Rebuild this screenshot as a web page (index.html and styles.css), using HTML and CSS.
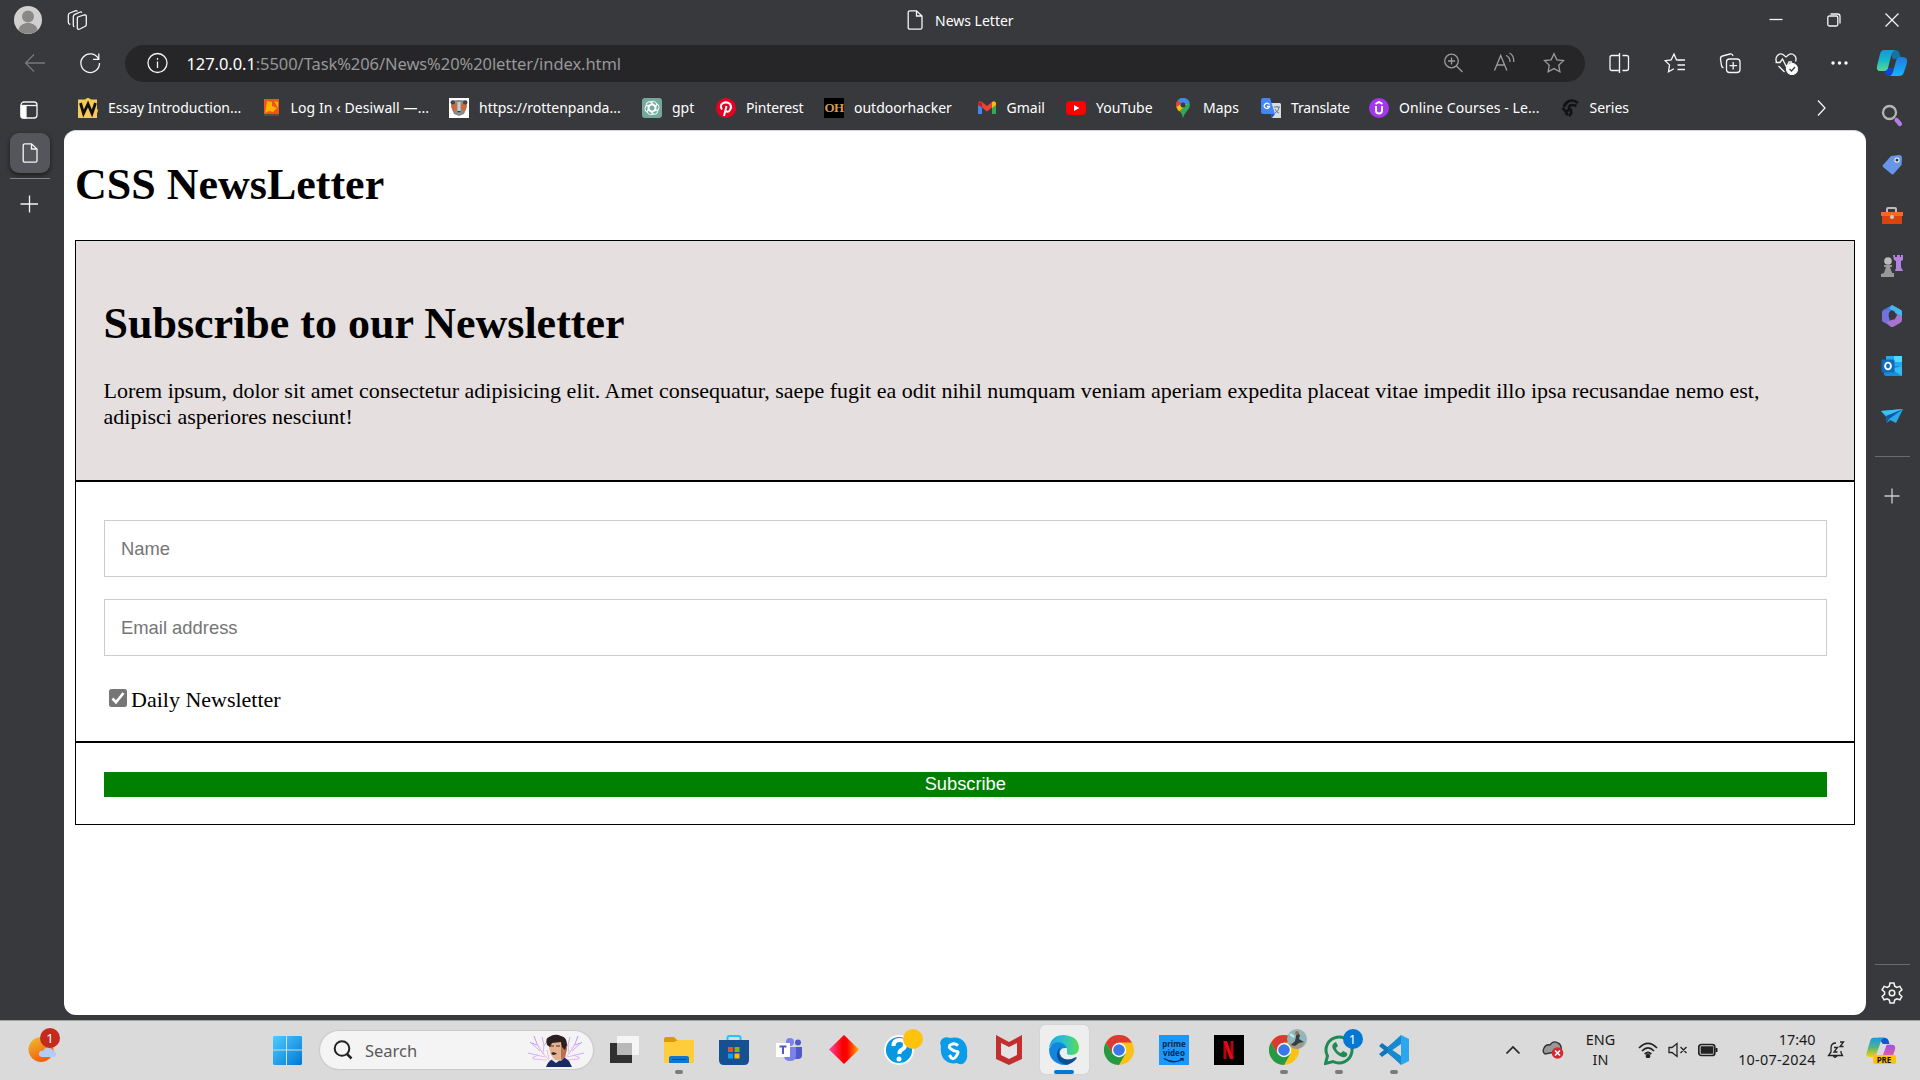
FILE: index.html
```
<!DOCTYPE html>
<html lang="en">
<head>
<meta charset="utf-8">
<title>News Letter</title>
<link rel="stylesheet" href="styles.css">
</head>
<body>
<div class="browser">
  <header class="titlebar">
    <svg class="avatar" width="28" height="28" viewBox="0 0 28 28"><circle cx="14" cy="14" r="14" fill="#d2d0ce"/><circle cx="14" cy="10.5" r="6" fill="#8a8886"/><path d="M4.500 24c1-5 5-7 9.500-7s8.500 2 9.500 7a14 14 0 0 1-19 0z" fill="#8a8886"/></svg>
    <svg class="workspaces line" width="24" height="24" viewBox="0 0 24 24"><path d="M12.500 8.500l6.500-2q2-.5 2 1.500v8q0 1.500-1.500 2l-5 2.500q-2.500 1-2.500-1.500v-8q0-2 .5-2.500zM9 18.500q-1-.5-1-2V8q0-1.500 1.500-2.200L15 3.500q1-.4 1.500.8M5 16q-2-.5-2-2.500V7q0-2 1.500-2.500L10 2.300q1.500-.5 2 .8" transform="translate(.3 .5)"/></svg>
    <div class="window-title">
      <svg class="line" width="16" height="20" viewBox="0 0 16 20"><path d="M3 .8h6.500L15 6v11.500q0 1.700-1.700 1.700H3q-1.800 0-1.800-1.700v-15Q1.200.8 3 .8zM9.500 1v5h5.500"/></svg>
      <span class="t-title">News Letter</span>
    </div>
    <div class="window-controls">
      <svg class="line" width="14" height="14" viewBox="0 0 14 14"><path d="M.5 6.500h13"/></svg>
      <svg class="line" width="14" height="14" viewBox="0 0 14 14"><rect x=".8" y="3" width="10" height="10" rx="1.500"/><path d="M3.500 1h7q2.500 0 2.500 2.500v7"/></svg>
      <svg class="line" width="14" height="14" viewBox="0 0 14 14"><path d="M.5.5l13 13M13.500.5l-13 13"/></svg>
    </div>
  </header>

  <div class="window">
    <div class="main">
      <nav class="toolbar">
        <svg class="line dim" width="24" height="24" viewBox="0 0 24 24"><path d="M22 12H3M11 3.500L2.500 12l8.500 8.500"/></svg>
        <svg class="line reload" width="24" height="24" viewBox="0 0 24 24"><path d="M20.500 8A9.300 9.300 0 1 0 21.500 12M20.800 2.500V8.300H15"/></svg>
        <div class="address">
          <svg class="line info" width="24" height="24" viewBox="0 0 24 24"><circle cx="12.500" cy="12" r="9.500"/><path d="M12.500 10.500V17M12.500 7v1.800"/></svg>
          <span class="url"><b>127.0.0.1</b>:5500/Task%206/News%20%20letter/index.html</span>
          <svg class="line mid" width="24" height="24" viewBox="0 0 24 24"><circle cx="10.500" cy="10" r="6.800"/><path d="M15.500 15l6 6M7 10h7M10.500 6.500v7"/></svg>
          <svg class="line mid" width="24" height="24" viewBox="0 0 24 24"><path d="M2.500 19.500L8.700 4.500l6.200 15M5 14h7.500M14 4.500q4 1.500 4 6.500M17.500 2q4.500 2 4.200 9"/></svg>
          <svg class="line mid" width="24" height="24" viewBox="0 0 24 24"><path d="M12 2.800l2.900 6 6.600.8-4.800 4.600 1.200 6.600-5.900-3.200-5.900 3.200 1.200-6.600L2.500 9.600l6.600-.8z"/></svg>
        </div>
        <div class="actions">
          <svg class="line" width="24" height="24" viewBox="0 0 24 24"><path d="M9 4.500H5Q3 4.500 3 6.500v11q0 2 2 2h4M15.500 4.500h4q2 0 2 2v11q0 2-2 2h-4M12.500 2v20M9 4.500h3.500M9 19.500h3.500"/></svg>
          <svg class="line" width="24" height="24" viewBox="0 0 24 24"><path d="M17.500 9.300l-4-.5L11 3 8.200 8.800l-6 .8 4.300 4.300-1 6.800 5.500-3M14 9h8M14.500 14H22M14.500 18.500H22"/></svg>
          <svg class="line" width="24" height="24" viewBox="0 0 24 24"><rect x="8.500" y="8" width="13.500" height="13.500" rx="3"/><path d="M15.200 11v7.500M11.500 14.700H19M5.500 17Q4 16.500 3.500 14.500L2.500 8Q2.300 5.500 4.500 5L12 3q2.500-.5 3 2"/></svg>
          <svg class="line" width="24" height="24" viewBox="0 0 24 24"><path d="M2.500 11Q1 7 3.500 4.500T9 3.500L12 6l3-2.500q3-1.500 5.500 1t1 6M1.500 11.500H6L8.500 8l4 8 2.500-5h3M4.500 15l6 6"/><circle cx="18" cy="18" r="5.500" fill="#fff"/><path d="M15.500 18l2 2 3.500-4" stroke="#38393c"/></svg>
          <svg class="dots" width="24" height="24" viewBox="0 0 24 24"><g fill="#fff"><circle cx="6" cy="12" r="1.700"/><circle cx="12.500" cy="12" r="1.700"/><circle cx="19" cy="12" r="1.700"/></g></svg>
        </div>
      </nav>

      <div class="below">
        <aside class="tabs">
          <svg class="line panel" width="18" height="18" viewBox="0 0 18 18"><rect x="1" y="1" width="16" height="16" rx="3" stroke-width="1.300"/><path d="M1 4.500h16"/><path d="M1 5v10q0 2 2 2h3V5z" fill="#fff"/></svg>
          <div class="tab"><svg class="line" width="16" height="20" viewBox="0 0 16 20"><path d="M3 .8h6.500L15 6v11.500q0 1.700-1.700 1.700H3q-1.800 0-1.800-1.700v-15Q1.200.8 3 .8zM9.500 1v5h5.500"/></svg></div>
          <div class="rule"></div>
          <svg class="line" width="18" height="18" viewBox="0 0 18 18"><path d="M9.500.5v17M.5 9h17.500"/></svg>
        </aside>

        <div class="content">
          <div class="bookmarks">
            <div class="bm"><svg width="20" height="20" viewBox="0 0 20 20"><path d="M0 1.500h7l3-2 3 2h6v9l1 2-1 3V20H0z" fill="#f5cb55"/><path d="M2.500 5l3 10.500L10 6l4 9.500L17.500 5" stroke="#111" stroke-width="2.800" fill="none"/></svg><span>Essay Introduction...</span></div>
            <div class="bm"><svg width="20" height="20" viewBox="0 0 20 20"><path d="M3 1h15v15H3z" fill="#f4511e"/><path d="M6 3l5 1v4l5 2-4 4-4-1-4 2 1-5zM13 3l4 1v6z" fill="#ffb300"/><path d="M3 16h15v2H3z" fill="#5a4a44"/></svg><span class="wide">Log In ‹ Desiwall —...</span></div>
            <div class="bm"><svg width="20" height="20" viewBox="0 0 20 20"><path d="M0 0h20v20H0z" fill="#fff"/><path d="M3 3q7-2 14 0l1 6-3 7-5 2-5-2-3-7z" fill="#8a8a8a"/><circle cx="3.800" cy="4.500" r="2.300" fill="#444"/><circle cx="16.200" cy="4.500" r="2.300" fill="#444"/><path d="M2.500 7l5.500-1-1 6-3 1zM17.500 7L12 6l1 6 3 1z" fill="#d6662c"/><path d="M8.500 4h3v9l-1.500 3L8.500 13z" fill="#ccc"/><path d="M8 13h4l-2 2z" fill="#333"/></svg><span>https://rottenpanda...</span></div>
            <div class="bm"><svg width="20" height="20" viewBox="0 0 20 20"><rect width="20" height="20" rx="3" fill="#74aa9c"/><g fill="none" stroke="#fff" stroke-width=".9"><path id="petal" d="M8 4.300Q11.500 1.800 14 4.500 15 6.200 14.500 8L10.500 5.700 7.200 7.600v4.600"/><use href="#petal" transform="rotate(60 10 10)"/><use href="#petal" transform="rotate(120 10 10)"/><use href="#petal" transform="rotate(180 10 10)"/><use href="#petal" transform="rotate(240 10 10)"/><use href="#petal" transform="rotate(300 10 10)"/></g></svg><span>gpt</span></div>
            <div class="bm"><svg width="20" height="20" viewBox="0 0 20 20"><circle cx="10" cy="10" r="10" fill="#e60023"/><path d="M8 18l2.500-10M6 11.500Q3.500 8 6.500 5.500 10.500 3 14 6q2 3 0 6t-4.500.8" fill="none" stroke="#fff" stroke-width="2"/></svg><span class="tight">Pinterest</span></div>
            <div class="bm"><i class="oh">OH</i><span>outdoorhacker</span></div>
            <div class="bm"><svg width="20" height="20" viewBox="0 0 20 20"><path d="M1 5v11h4V8z" fill="#4285f4"/><path d="M15 8v8h4V5z" fill="#34a853"/><path d="M1 5q1-3 4-1l5 4 5-4v5.500l-5 4-5-4z" fill="#ea4335"/><path d="M1 5q1-2 4 0v4.500L1 7z" fill="#c5221f"/><path d="M15 4q3-2 4 1v2l-4 3z" fill="#fbbc04"/></svg><span>Gmail</span></div>
            <div class="bm"><svg width="20" height="20" viewBox="0 0 20 20"><rect y="3" width="20" height="14" rx="4" fill="#f00"/><path d="M8 7l5.500 3L8 13z" fill="#fff"/></svg><span>YouTube</span></div>
            <div class="bm"><svg width="20" height="20" viewBox="0 0 20 20"><path d="M3 7a7 7 0 0 1 14 0q0 3-3 6t-4 7Q9 15 6 12.500 3 9.500 3 7z" fill="#34a853"/><path d="M3 7q0-3 2-5l5 5-5 5Q3 9.500 3 7z" fill="#ea4335"/><path d="M5 2Q7.500 0 10 0q5 0 6.500 4.500L10 7z" fill="#4285f4"/><path d="M14 6l-8 7.500Q4 11 3.500 9L8 6z" fill="#fbbc04"/><circle cx="10" cy="7" r="2.500" fill="#263c72"/></svg><span>Maps</span></div>
            <div class="bm"><svg width="20" height="20" viewBox="0 0 20 20"><path d="M7 5h12l1 1v14h-9z" fill="#dadce0"/><path d="M2 0h7l5 16H2q-2 0-2-2V2q0-2 2-2z" fill="#4285f4"/><path d="M11 20l3-4H9.500z" fill="#1a56c8"/><path d="M8.500 6.500Q6 4 4 6.200T4.500 10 8.500 8.500H6" fill="none" stroke="#fff" stroke-width="1.300"/><path d="M13 9h6M16 8v1M14 11q2 4 4 4M18 9q0 4-4 6" fill="none" stroke="#607d8b"/></svg><span class="tight">Translate</span></div>
            <div class="bm"><svg width="20" height="20" viewBox="0 0 20 20"><circle cx="10" cy="10" r="10" fill="#a435f0"/><path d="M6.500 6L10 4l3.500 2M7 8v4.500q0 3 3 3t3-3V8" fill="none" stroke="#fff" stroke-width="2"/></svg><span class="wide">Online Courses - Le...</span></div>
            <div class="bm"><svg width="20" height="20" viewBox="0 0 20 20"><path d="M18 5Q14 1.500 9 3 5 5 4 9M16.500 8q-5-2-7 0t1.500 4q1 4-2 6M2.500 10l4 4 3-3M5 14l3 3" fill="none" stroke="#111213" stroke-width="2.600"/></svg><span>Series</span></div>
            <svg class="line more" width="24" height="24" viewBox="0 0 24 24"><path d="M8 4.500l7 7.500-7 7.500"/></svg>
          </div>

          <main class="page">
            <h1>CSS NewsLetter</h1>
            <section class="intro">
              <h1>Subscribe to our Newsletter</h1>
              <p>Lorem ipsum, dolor sit amet consectetur adipisicing elit. Amet consequatur, saepe fugit ea odit nihil numquam veniam aperiam expedita placeat vitae impedit illo ipsa recusandae nemo est, adipisci asperiores nesciunt!</p>
            </section>
            <section class="fields">
              <input type="text" placeholder="Name">
              <input type="text" placeholder="Email address">
              <label><svg width="18" height="18" viewBox="0 0 18 18"><rect width="18" height="18" rx="2.500" fill="#767676"/><path d="M3.500 9.500l3.500 3.800L14.500 4" fill="none" stroke="#fff" stroke-width="2.600"/></svg><span>Daily Newsletter</span></label>
            </section>
            <section class="submit"><button>Subscribe</button></section>
          </main>
        </div>
      </div>
    </div>

    <aside class="sidebar">
      <svg class="copilot" width="32" height="32" viewBox="0 0 32 32"><defs><linearGradient id="ca" x2="0" y2="1"><stop stop-color="#1497dc"/><stop offset=".5" stop-color="#17b9cb"/><stop offset="1" stop-color="#5bd98e"/></linearGradient><linearGradient id="cb" x2="0" y2="1"><stop stop-color="#2379dc"/><stop offset="1" stop-color="#12b6ff"/></linearGradient></defs><path d="M13 3h6q4 0 5 5l1 4h-8z" fill="#1173a8"/><path d="M7 21h10l2 8h-5q-4 0-5-3z" fill="#1641d2"/><path d="M8 3h11q-3 1-4 6l-3 12q-1 3-4 3H4q-4 0-3-5L4 7q1-4 4-4z" fill="url(#ca)"/><path d="M24 10h3q5 0 4 6l-3 9q-1 4-5 4h-9q2-1 3-4l3-11q1-4 4-4z" fill="url(#cb)"/></svg>
      <div class="apps">
        <svg width="24" height="24" viewBox="0 0 24 24"><path d="M16.500 17l3.500 4" stroke="#b57ee5" stroke-width="4.200" stroke-linecap="round"/><circle cx="9.500" cy="9.500" r="6.500" fill="none" stroke="#b5b5b5" stroke-width="2.300"/></svg>
        <svg width="24" height="24" viewBox="0 0 24 24"><path d="M11 3l8-1q3 0 3 3l-.5 7-8 9q-1 1-2 0l-8.500-7q-1-1 0-2z" fill="#6795e8"/><circle cx="17" cy="7" r="2.600" fill="#fff"/><circle cx="17" cy="7" r="1.600" fill="#333"/></svg>
        <svg width="24" height="24" viewBox="0 0 24 24"><path d="M7 10V6q0-1 1-1h7q1 0 1 1v4" fill="none" stroke="#bbb" stroke-width="2"/><path d="M1 9h22v4H1z" fill="#f36a24"/><path d="M2 13h20v7q0 1-1 1H3q-1 0-1-1z" fill="#dc440d"/><circle cx="12" cy="14" r="2" fill="#ccc"/></svg>
        <svg width="24" height="24" viewBox="0 0 24 24"><path d="M13 1h2v2h2V1h3v2h1V1h2v5l-2 1v6l2 4h-8l1-3V7l-2-1z" fill="#b183df"/><circle cx="8" cy="7" r="3.800" fill="#bbb"/><path d="M4 11h8v2h-2l2 6h2v4H1v-3l3-1 2-6H4z" fill="#999"/></svg>
        <svg width="24" height="24" viewBox="0 0 24 24"><path d="M12 1l9 5q1 1 1 2v5l-6-4-5-3-3 6-6 4V8q0-1 1-2z" fill="#4379d8"/><path d="M12 1l9 5q1 1 1 2v5l-7-4V7L9 5z" fill="#43b8ef"/><path d="M2 16V8l7-3v7l1 5 2 5-9-4q-1-1-1-2z" fill="#7771db"/><path d="M6 19l9-5 2-4 5 3v3q0 2-2 3l-7 4h-2z" fill="#a772d0"/><path d="M9 8.500L13.500 7l3.500 4.500-2.500 4H10L8.500 12z" fill="#38393c"/></svg>
        <svg width="24" height="24" viewBox="0 0 24 24"><path d="M6 2h16v10H6z" fill="#28a8ea"/><path d="M14 2h8v6h-8z" fill="#50d9ff"/><path d="M4 12h18v10H6q-2 0-2-2z" fill="#1490df"/><path d="M22 12v10L11 15z" fill="#32bdf5"/><rect x="1.500" y="5.500" width="13" height="13" rx="1" fill="#0f6cbd"/><ellipse cx="8" cy="12" rx="2.900" ry="3.400" fill="none" stroke="#fff" stroke-width="1.900"/></svg>
        <svg width="24" height="24" viewBox="0 0 24 24"><path d="M1 7l22-2-7 14-6-3-3 3-1-6z" fill="#2aa8e8"/><path d="M1 7l22-2L7 12z" fill="#36c5f2"/><path d="M6 12l17-7L9 15l-2 4z" fill="#0c59a4"/></svg>
      </div>
      <div class="rule"></div>
      <svg class="line plus" width="16" height="16" viewBox="0 0 16 16"><path d="M8 .5v15M.5 8h15"/></svg>
      <div class="rule bottom"></div>
      <svg class="line gear" width="22" height="22" viewBox="0 0 22 22"><path d="M9 1h4l.7 3.200 2 1.200 3.200-1 2 3.400-2.500 2.200v2.200l2.500 2.200-2 3.400-3.200-1-2 1.200L13 21H9l-.7-3-2-1.200-3.200 1-2-3.400 2.500-2.200V10L1.100 7.800l2-3.400 3.200 1 2-1.200z"/><circle cx="11" cy="11" r="2.800"/></svg>
    </aside>
  </div>
</div>

<footer class="taskbar">
  <div class="weather"><svg width="30" height="28" viewBox="0 0 30 28"><defs><linearGradient id="sun" x2=".5" y2="1"><stop stop-color="#efc12e"/><stop offset="1" stop-color="#f45d10"/></linearGradient></defs><circle cx="13" cy="13.500" r="12.500" fill="url(#sun)"/><path d="M14 21q-4-1-3-4t4-2q2-4 6-3t4 3q3 0 3 3t-3 3z" fill="#b5ccf5"/></svg><span class="badge red">1</span></div>
  <svg class="start" width="30" height="30" viewBox="0 0 30 30"><defs><linearGradient id="win" x2="1" y2="1"><stop stop-color="#4fcbff"/><stop offset="1" stop-color="#0078d4"/></linearGradient></defs><path d="M2 1h12v13.500H1V2zM15 1h14l1 1v12.500H15zM1 15.500h13V30H2l-1-1zM15 15.500h15V29l-1 1H15z" fill="url(#win)"/></svg>
  <div class="search">
    <svg width="20" height="20" viewBox="0 0 20 20"><circle cx="9" cy="8.500" r="7.300" fill="none" stroke="#222" stroke-width="2"/><path d="M14 14l4.500 4.500" stroke="#222" stroke-width="2.500"/></svg>
    <span>Search</span>
    <svg width="58" height="34" viewBox="0 0 58 34"><defs><linearGradient id="spark" gradientUnits="userSpaceOnUse" x1="2" y1="4" x2="26" y2="30"><stop stop-color="#b48cf5"/><stop offset=".6" stop-color="#e3b4f5"/><stop offset="1" stop-color="#ffcfa8"/></linearGradient></defs><g fill="none" stroke="url(#spark)" stroke-width="1"><path id="bolts" d="M23 28Q14 20 10 11L7 3M13 18L3 9M18 24L1 20M16 21l1-9-2-8M22 26l-2-9M20 27L6 26M10 12l-5-2M11 22l-6 3M17 13l3-5"/><use href="#bolts" transform="matrix(-1 0 0 1 58 0)"/></g><path d="M19 34q2-6 7-8l4 2 7-4 5 4 3 6z" fill="#1a2a66"/><path d="M26 22l8 1 2 2-7 5-4-3z" fill="#e8e8f4"/><path d="M23 9l13-3 3 4 1 7-2 7-4 4-6-1-4-5-2-7z" fill="#e3b190"/><path d="M34 8l5 2 1 6-2 8-4 3z" fill="#b5704f"/><path d="M20 12q-2-7 2-8 6-4 12-1 6 1 6 9l-2 5-3-3-1-5-9 1-2 4z" fill="#2b201f"/><path d="M24 20q3-2 6 1l-4 1z" fill="#2b201f"/><path d="M23 13h4M29 13h4" stroke="#4a2f28"/></svg>
  </div>
  <div class="pinned">
    <div><svg width="30" height="30" viewBox="0 0 30 30"><path d="M1 8h22v20H1z" fill="#303030"/><path d="M8 1h22v19H8z" fill="#f5f5f5"/><path d="M8 8h15v12H8z" fill="#b8b8b8"/></svg></div>
    <div class="run"><svg width="30" height="30" viewBox="0 0 30 30"><path d="M0 4q0-2 2-2h8l3 3h17v10H0z" fill="#dc9a05"/><path d="M0 7h10l4-2h16v23H0z" fill="#ffcd3b"/><path d="M5 28v-5q0-2 2-2h16q2 0 2 2v5z" fill="#0f78d4"/><path d="M8 24.500h14" stroke="#064a8c"/></svg></div>
    <div><svg width="30" height="30" viewBox="0 0 30 30"><path d="M8.500 6V3q0-2 2-2h9q2 0 2 2v3" fill="none" stroke="#22c4f5" stroke-width="2"/><path d="M0 5h30v20q0 5-5 5H5q-5 0-5-5z" fill="#145092"/><path d="M9 12h5v5H9z" fill="#f25022"/><path d="M15.500 12h5v5h-5z" fill="#7fba00"/><path d="M9 18.500h5v5H9z" fill="#00a4ef"/><path d="M15.500 18.500h5v5h-5z" fill="#ffb900"/></svg></div>
    <div><svg width="30" height="30" viewBox="0 0 30 30"><circle cx="16" cy="7" r="4" fill="#7b83eb"/><circle cx="24" cy="7.500" r="3" fill="#5059c9"/><path d="M20 12h8v8q0 4-4 4h-4z" fill="#5059c9"/><path d="M10 12h12v9q0 5-6 5t-6-5z" fill="#7b83eb"/><path d="M2 8h14v14H2z" fill="#fff"/><path d="M5.500 11.500h7M9 11.500V19" stroke="#5059c9" stroke-width="2"/></svg></div>
    <div><svg width="30" height="30" viewBox="0 0 30 30"><defs><linearGradient id="dia"><stop stop-color="#ff45a5"/><stop offset=".45" stop-color="#f00"/><stop offset=".6" stop-color="#f00"/><stop offset="1" stop-color="#ffb000"/></linearGradient></defs><path d="M15 0l15 14.500L15 29 0 14.500z" fill="url(#dia)"/></svg></div>
    <div><svg width="30" height="30" viewBox="0 0 30 30"><circle cx="15" cy="15" r="14" fill="#0799df" stroke="#fff" stroke-width="1.800"/><path d="M9.500 11q0-6 6-6t5.500 5q0 3-3 4.500t-2.500 4.500" fill="none" stroke="#fff" stroke-width="4"/><circle cx="15" cy="24" r="2.500" fill="#fff"/></svg><span class="badge yellow"></span></div>
    <div><svg width="30" height="30" viewBox="0 0 30 30"><path d="M2 11Q0 7 3 4t8-1q10-2 15 5 3 5 2 11 1 4-2 8t-8 1Q9 30 4 23q-3-5-2-12z" fill="#0a9ce8"/><path d="M19 10.500Q15.500 7.500 12 9.500t0 4.500 6 2.500-1 5-6.500-1.500" fill="none" stroke="#fff" stroke-width="3"/></svg></div>
    <div><svg width="30" height="30" viewBox="0 0 30 30"><path d="M2 0l13 7 13-7v24l-13 6-13-6z" fill="#c32f2e"/><path d="M7 8l8 4 8-4v12l-8 4-8-4z" fill="#e4e4e4"/></svg></div>
    <div class="active"><svg width="30" height="30" viewBox="0 0 30 30"><defs><linearGradient id="eg"><stop stop-color="#1fa4e8"/><stop offset=".5" stop-color="#2bc3cf"/><stop offset="1" stop-color="#5ddc4c"/></linearGradient></defs><path d="M0 13Q2 0 15 0q14 1 15 12 0 8-8 8-5 0-4-3 1-6-5-8Q5 7 0 13z" fill="url(#eg)"/><path d="M0 14q5-9 13-6 4 2 5 5-8-1-7 6 2 6 10 6l-2 4.500Q13 31 8 28 0 24 0 14z" fill="#1286dc"/><path d="M12 12q-4 6 0 10 6 5 15 0 1 0 .5 1.500-4 5-9 6.200-9-.7-10.500-8.200-1-6 4-9.500z" fill="#0d4f97"/></svg></div>
    <div><svg width="30" height="30" viewBox="0 0 30 30"><g id="chrome"><circle cx="15" cy="15" r="15" fill="#fbc116"/><path d="M2 7.500A15 15 0 0 1 28 7.500H15L8.500 19z" fill="#dc3a30"/><path d="M2 7.500A15 15 0 0 0 15 30l6.500-11.200L15 15l-6.500 3.700z" fill="#249a46"/><circle cx="15" cy="15" r="7.200" fill="#fff"/><circle cx="15" cy="15" r="5.800" fill="#3b78e7"/></g></svg></div>
    <div><div class="prime"><span>prime video</span><svg width="22" height="5" viewBox="0 0 22 5"><path d="M1 .5q9 6 18 1M17 .5h3v2.500" fill="none" stroke="#05294b" stroke-width="1.300"/></svg></div></div>
    <div><svg width="30" height="30" viewBox="0 0 30 30"><path d="M0 0h30v30H0z"/><path d="M11 6v18M18 6v18" stroke="#b1060f" stroke-width="3"/><path d="M9.500 6h3.500l6.500 18H16z" fill="#e50914"/></svg></div>
    <div class="run"><svg width="30" height="30" viewBox="0 0 30 30"><use href="#chrome"/></svg><span class="badge photo"><svg width="20" height="20" viewBox="0 0 20 20"><circle cx="10" cy="10" r="10" fill="#91b7bc"/><path d="M2 14l16-1-3 5q-6 4-11 0z" fill="#9a9b86"/><path d="M10 3l3 3-1 4 5 3-5 1-4 3-4-1 4-4z" fill="#343f45"/><circle cx="10" cy="4" r="2" fill="#a06c4a"/><path d="M3 5l4 3" stroke="#dce8e9" stroke-width="2"/></svg></span></div>
    <div class="run"><svg width="30" height="30" viewBox="0 0 30 30"><path d="M1.500 28.500l2-7.500A13 13 0 1 1 9 26.500z" fill="none" stroke="#1f8b54" stroke-width="3"/><path d="M10 8q-4 3 1 9t10 5q3-1 2-4l-4-2-2 2q-4-1-5-5l2-2-2-4z" fill="#1f8b54"/></svg><span class="badge blue">1</span></div>
    <div class="run"><svg width="30" height="30" viewBox="0 0 30 30"><path d="M3 8l19 14v7L0 11zM22 1v7L3 22l-3-3z" fill="#1177bd"/><path d="M22 0l8 4v22l-8 4z" fill="#2ba7ef"/><path d="M22 0v9L12 16 8 13zM22 30v-9l-10-7-4 3z" fill="#1689d0"/></svg></div>
  </div>
  <div class="tray">
    <svg class="ink" width="16" height="10" viewBox="0 0 16 10"><path d="M1.500 8.500L8 2l6.500 6.500"/></svg>
    <svg class="cloud" width="22" height="20" viewBox="0 0 22 20"><path d="M3 14q-3-2-1-6t6-3q3-5 8-2 4 2 3 8z" fill="#999" stroke="#333" stroke-width="1.400"/><circle cx="15.500" cy="13" r="5.800" fill="#d92732"/><path d="M13 10.500l5 5M18 10.500l-5 5" stroke="#fff" stroke-width="1.600"/></svg>
    <div class="lang">ENG<br>IN</div>
    <svg class="ink wifi" width="20" height="16" viewBox="0 0 20 16"><path d="M1 6q9-9 18 0M4 9q6-6 12 0M6.700 12q3.300-3 6.600 0"/><circle cx="10" cy="14" r="1.500" fill="#222"/></svg>
    <svg class="ink vol" width="20" height="16" viewBox="0 0 20 16"><path d="M1 5.500h3l5-4v13l-5-4H1zM12.500 5l6 6M18.500 5l-6 6" stroke-width="1.300"/></svg>
    <svg class="ink bat" width="20" height="14" viewBox="0 0 20 14"><rect x=".8" y="1.500" width="16" height="11" rx="2.500"/><path d="M3.500 4h11v6h-11z" fill="#222"/><path d="M18.500 5v4" stroke-width="2"/></svg>
    <div class="clock">17:40<br><span>10-07-2024</span></div>
    <svg class="ink bell" width="18" height="18" viewBox="0 0 18 18"><path d="M9 2Q4 2 4 7v4l-2.500 3.500h14L14 11.500V10M6.500 15q1 2.500 3.500 0M7 6.500h3.500l-3.500 4.500h3.500M13 1h3.500L13 5.500h3.500" stroke-width="1.300"/></svg>
    <div class="pre"><svg width="30" height="28" viewBox="0 0 32 32" preserveAspectRatio="none"><defs><linearGradient id="pa" x2="0" y2="1"><stop stop-color="#159be9"/><stop offset=".5" stop-color="#54b67a"/><stop offset="1" stop-color="#ffd000"/></linearGradient><linearGradient id="pb" x2="0" y2="1"><stop stop-color="#a54de8"/><stop offset="1" stop-color="#ff667d"/></linearGradient></defs><path d="M13 2h7q4 0 5 7h-7z" fill="#1555d3"/><path d="M8 2h12q-4 1-5 7l-4 12q-1 3-4 3H3q-4-1-2-6L4 7q1-5 4-5z" fill="url(#pa)"/><path d="M22 10h5q5 0 4 5l-3 10q-1 4-5 4h-9q2-1 3-4z" fill="url(#pb)"/></svg><span>PRE</span></div>
  </div>
</footer>
</body>
</html>
```
FILE: styles.css
```
* { box-sizing: border-box; }
body { margin: 0; width: 1920px; height: 1080px; overflow: hidden; background: #38393c; font-family: "Noto Sans", sans-serif; color: #fff; }
svg { display: block; flex: none; }
.line { fill: none; stroke: #f5f5f5; stroke-width: 1.3; }
.line.dim { stroke: #77787a; }
.line.mid { stroke: #9b9b9c; }
.browser { height: 1020px; display: flex; flex-direction: column; }
.titlebar { height: 40px; flex: none; display: flex; align-items: center; padding: 0 21px 0 14px; }
.workspaces { margin-left: 23px; }
.window-title { display: flex; align-items: center; margin-left: 818px; gap: 12px; font-size: 14px; white-space: nowrap; }
.window-controls { margin-left: auto; display: flex; gap: 44px; }
.window { display: flex; flex: 1; min-height: 0; }
.main { width: 1866px; display: flex; flex-direction: column; }
.toolbar { height: 46px; flex: none; display: flex; align-items: center; padding-left: 23px; }
.reload { margin-left: 31px; }
.address { width: 1460px; height: 37px; margin-left: 23px; border-radius: 19px; background: #262628; display: flex; align-items: center; padding: 0 19px 0 20px; gap: 26.5px; }
.url { margin-left: -9px; margin-right: auto; font-size: 16.5px; color: #979798; white-space: nowrap; letter-spacing: -0.07px; }
.url b { font-weight: 400; color: #fff; }
.actions { display: flex; margin-left: 22px; gap: 31.5px; }
.dots { margin-left: -2px; }
.below { display: flex; flex: 1; min-height: 0; }
.tabs { width: 64px; display: flex; flex-direction: column; align-items: center; padding: 15px 6px 0 0; }
.tab { width: 40px; height: 40px; margin: 14px 0 5px 2px; border-radius: 9px; background: #55565b; box-shadow: 0 2px 4px #1b1b1d; display: flex; align-items: center; justify-content: center; }
.tabs .rule { width: 40px; height: 1px; margin: 0 0 16px 2px; background: #828284; }
.content { flex: 1; min-width: 0; display: flex; flex-direction: column; }
.bookmarks { height: 44px; flex: none; display: grid; align-items: center; padding: 0 0 1px 14px; font-size: 14px; grid-template-columns: 182.5px 188.5px 193px 74px 108px 152.5px 89.5px 107px 88px 108px 190.5px 250px 24px; }
.bm { display: flex; align-items: center; gap: 10px; white-space: nowrap; }
.wide { letter-spacing: 0.1px; }
.tight { letter-spacing: -0.15px; }
.oh { width: 20px; height: 20px; background: #000; color: #d49a4c; font: 700 13px/20px "Liberation Serif", serif; text-align: center; letter-spacing: -0.6px; }
.page { width: 1801.6px; height: 885px; background: #fff; border-radius: 12px; padding: 29px 11px 0; color: #000; font-family: "Liberation Serif", serif; font-size: 22px; overflow: hidden; border-top: 1px solid #d5d5d5; }
.page h1 { font-size: 44px; line-height: 50px; margin: 0; }
.intro { height: 241px; margin-top: 30px; border: 1px solid #000; background: #e5dfdf; padding: 58px 27.500px 0; }
.intro p { margin: 29px 0 0; line-height: 26px; }
.fields { height: 261px; border: 1px solid #000; padding: 38px 27px 0 28px; }
.fields input { display: block; width: 100%; height: 57px; margin: 0 0 22px; padding: 0 16px; border: 1px solid #ccc; font: 18.4px "Liberation Sans", sans-serif; }
.fields input::placeholder { color: #757575; }
.fields label { display: flex; align-items: center; gap: 4px; padding-left: 5px; margin-top: 31px; line-height: 26px; }
.fields label svg { margin-top: -4px; }
.submit { height: 83px; border: 1px solid #000; padding: 29px 27px 0 28px; }
.submit button { display: block; width: 100%; height: 25px; border: 0; padding: 0 0 1px; background: green; color: #fff; font: 18.3px "Liberation Sans", sans-serif; }
.sidebar { width: 54px; display: flex; flex-direction: column; align-items: center; padding-right: 2px; }
.copilot { margin-top: 7px; }
.apps { display: flex; flex-direction: column; gap: 26.2px; margin-top: 24px; }
.sidebar .rule { width: 35px; height: 1px; background: #6a6b6e; margin-top: 28px; }
.plus { margin-top: 31px; stroke: #ccc; }
.sidebar .rule.bottom { margin: auto 0 17px; }
.gear { margin-bottom: 16px; stroke-width: 1.5; }
.taskbar { height: 60px; display: flex; align-items: center; background: #dadada; color: #1b1b1b; box-shadow: inset 0 1px #a3a3a3; }
.weather { width: 34px; margin-left: 28px; position: relative; }
.badge { position: absolute; width: 20px; height: 20px; border-radius: 50%; font-size: 13px; line-height: 20px; text-align: center; color: #fff; }
.red { left: 12px; top: -8px; background: #c42b1c; }
.start { margin-left: 210px; }
.search { width: 273px; height: 38px; margin-left: 18px; border-radius: 20px; background: #f4f4f4; box-shadow: 0 0 1px 1px #c8c8c8; display: flex; align-items: center; padding: 0 8px 0 13px; }
.search span { margin: 0 auto 0 12px; font-size: 16.5px; color: #5a5a5a; }
.pinned { display: flex; margin-left: 3.5px; }
.pinned > div { width: 55px; height: 60px; position: relative; display: flex; align-items: center; justify-content: center; }
.run::after, .active::after { content: ""; position: absolute; top: 50px; width: 8px; height: 4px; border-radius: 2px; background: #7b7b7b; }
.active::after { width: 20px; background: #0078d4; }
.pinned .active { width: 49px; height: 49px; margin: 5px 3px 6px; background: #eee; border-radius: 5px; box-shadow: 0 0 1px #aaa; }
.active::after { top: 45px; }
.yellow { left: 31px; top: 9px; background: #ffc20e; }
.photo { left: 30px; top: 9px; }
.blue { left: 31px; top: 9px; background: #0078d4; }
.prime { width: 30px; height: 30px; background: #1a98ff; color: #05294b; font: 700 8px/9px "Noto Sans", sans-serif; text-align: center; padding-top: 4px; }
.prime span { display: block; }
.prime svg { margin: 1px 0 0 4px; }
.tray { display: flex; align-items: center; margin-left: 83px; }
.ink { fill: none; stroke: #222; stroke-width: 1.7; }
.cloud { margin-left: 21px; }
.lang { width: 40px; margin-left: 17px; font-size: 14.4px; line-height: 20px; text-align: center; }
.wifi { margin-left: 17px; }
.vol { margin-left: 10px; }
.bat { margin-left: 10px; }
.clock { width: 90px; margin-left: 8px; font-size: 14.4px; line-height: 20px; text-align: right; white-space: nowrap; }
.clock span { letter-spacing: 0.25px; margin-right: -0.25px; }
.bell { margin-left: 11px; }
.pre { position: relative; margin-left: 21px; }
.pre span { position: absolute; left: 7px; top: 19px; width: 23px; height: 9px; border-radius: 2px; background: #ffc20e; font: 700 8px/9px "Noto Sans", sans-serif; text-align: center; color: #111; }
```
